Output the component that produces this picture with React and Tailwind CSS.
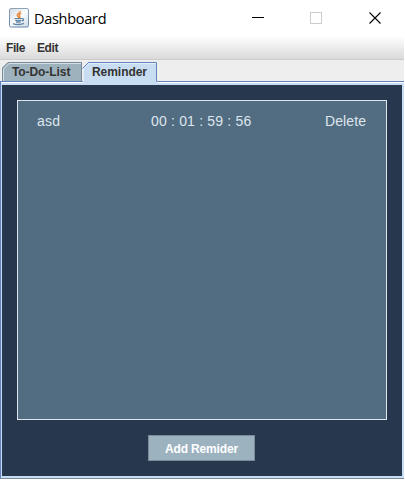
function JavaIcon() {
  return (
    <svg width="20" height="20" viewBox="0 0 20 20" fill="none">
      <defs>
        <linearGradient id="frame" x1="0" y1="0" x2="0" y2="1">
          <stop offset="0" stopColor="#8fa3b5" />
          <stop offset="1" stopColor="#6288ad" />
        </linearGradient>
        <linearGradient id="face" x1="0" y1="0" x2="1" y2="1">
          <stop offset="0" stopColor="#cfd9e2" />
          <stop offset="0.5" stopColor="#fbfcfd" />
          <stop offset="1" stopColor="#cfdae4" />
        </linearGradient>
      </defs>
      <rect x="0.5" y="0.5" width="19" height="18.5" rx="1.5" fill="url(#face)" stroke="url(#frame)" />
      <path d="M11 3c.6 2-3.300 2.600-2.700 4.400.2.900 1.300 1.300 1.500 2.400M12.300 5.400c-2 .8-2.600 1.500-1.700 2.600.6.800.3 1.300-.5 1.800" stroke="#e8893f" strokeWidth="1.500" />
      <path d="M5.500 10.700h7.200M6.300 12.600h6M7 14.200h4.600M12.700 10.700c2.300-.5 2.500 1.700.2 2.300" stroke="#6286a6" strokeWidth="1.300" />
      <path d="M4 15.600c2.500 1.300 8.500 1.200 11-.2" stroke="#6286a6" strokeWidth="1.300" />
    </svg>
  );
}

export default function App() {
  return (
    <div className="h-[480px] w-[405px] overflow-hidden bg-white font-['Liberation_Sans',Arial,sans-serif]">
      <div className="flex h-[479px] w-[404px] flex-col">
        <header className="flex h-9 shrink-0 items-center pl-[9px] text-black">
          <JavaIcon />
          <span className="ml-[5px] w-[212px] pt-[2px] font-['Open_Sans','Noto_Sans',sans-serif] text-[14.5px] leading-5 tracking-[-0.29px]">Dashboard</span>
          <svg width="158" height="36" viewBox="246 0 158 36" fill="none" shapeRendering="crispEdges">
            <path d="M252 17.500h12" stroke="#000" />
            <rect x="310.500" y="12.500" width="11" height="11" stroke="#ccc" />
            <path d="M369.500 12.500l11 11M380.500 12.500l-11 11" stroke="#000" strokeWidth="1.100" shapeRendering="auto" />
          </svg>
        </header>

        <nav className="flex h-6 shrink-0 items-center gap-[12px] border-b border-[#ccc] bg-linear-to-b from-white to-[#dadada] pl-[6px] text-[12px] font-bold leading-4 text-[#333]">
          <span className="w-[19px] tracking-[-0.4px]">File</span>
          <span className="tracking-[-0.4px]">Edit</span>
        </nav>

        <div className="flex h-[21px] shrink-0 bg-[#eee] pl-[2px] pt-[2px]">
          <div className="relative h-[19px] w-[80px]">
            <svg className="absolute inset-0" width="80" height="19" fill="none">
              <path d="M0 19V6L6 0H80V19Z" fill="#9eb2be" />
              <path d="M1.500 19V7L7 1.500H79" stroke="#d4e0e7" />
              <path d="M.5 19V6L6 .5H79.500V19" stroke="#7a8a99" />
            </svg>
            <span className="relative block pl-[10px] pt-[2px] text-[12px] font-bold leading-4 tracking-[-0.08px] text-[#333]">To-Do-List</span>
          </div>
          <div className="relative z-10 h-[22px] w-[75px]">
            <svg className="absolute inset-0" width="75" height="22" fill="none">
              <path d="M1 22V6L7 0H75V22Z" fill="#c8ddf2" />
              <path d="M1.500 20V7L7 1.500H74" stroke="#e3effb" />
              <path d="M.5 6.500L6.500 .5H74.500V19.500" stroke="#6382bf" />
            </svg>
            <span className="relative block pl-[10px] pt-[2px] text-[12px] font-bold leading-4 tracking-[-0.05px] text-[#333]">Reminder</span>
          </div>
        </div>

        <main className="flex min-h-0 flex-1 flex-col border-b border-l border-t border-b-[#7a8a99] border-l-[#6382bf] border-t-[#6382bf] bg-[#c8ddf2] pb-[2px] pl-px pr-[2px]">
          <div className="-mr-[2px] -ml-px h-px shrink-0 bg-white" />
          <div className="mt-[2px] flex min-h-0 flex-1 flex-col items-center bg-[#27374d] pt-[15px]">
            <section className="ml-[15px] h-[320px] w-[370px] shrink-0 self-start border border-[#dde6ed] bg-[#526d82]">
              <div className="flex items-center pl-[19px] pt-[12px] text-[14px] leading-4 text-[#dde6ed]">
                <span className="w-[114px] tracking-[0.25px]">asd</span>
                <span className="w-[174px] tracking-[0.18px]">00 : 01 : 59 : 56</span>
                <span className="tracking-[0.1px]">Delete</span>
              </div>
            </section>
            <button className="mr-px mt-[15px] h-[26px] w-[107px] border border-[#7a8a99] bg-[#9db2bf] pt-px text-[12px] font-bold leading-4 tracking-[-0.14px] text-white">Add Remider</button>
          </div>
        </main>
      </div>
    </div>
  );
}
